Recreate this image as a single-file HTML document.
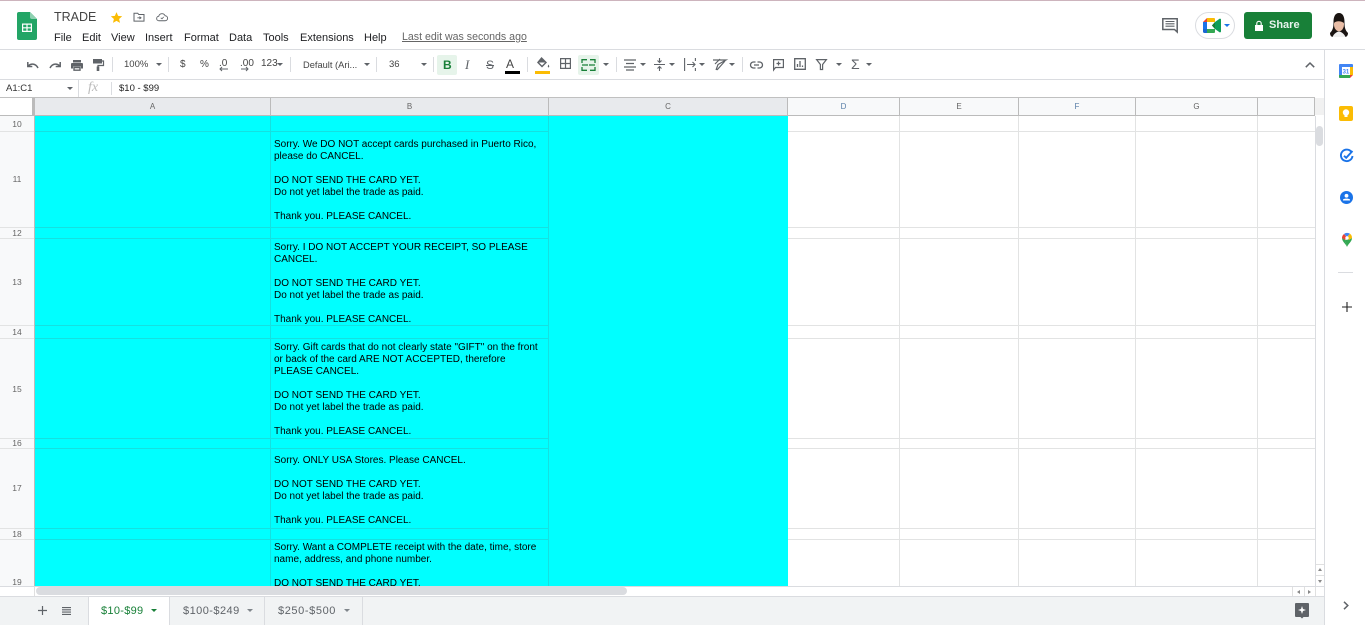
<!DOCTYPE html>
<html><head><meta charset="utf-8"><style>
html,body{margin:0;padding:0;background:#fff;width:1365px;height:625px;overflow:hidden;font-family:"Liberation Sans",sans-serif}
.a{position:absolute}
#root{position:absolute;left:0;top:0;width:1365px;height:625px;overflow:hidden}
.m{position:absolute;top:31px;font-size:11px;line-height:14px;color:#202124;white-space:nowrap}
.t{position:absolute;font-size:10px;color:#444;line-height:12px;white-space:nowrap}
.h{position:absolute;background:#bbb}
.g{position:absolute;background:#e2e3e3}
.c{position:absolute;background:#15e0e0}
.ch{position:absolute;top:98px;height:17px;line-height:17px;font-size:8px;color:#666;text-align:center}
.rn{position:absolute;left:0;width:34px;text-align:center;font-size:8.5px;color:#666;line-height:10px}
.tx{position:absolute;left:274px;width:272px;font-size:10px;line-height:12px;color:#000;white-space:pre}
.sep{position:absolute;top:57px;width:1px;height:15px;background:#dadce0}
.dd{position:absolute;width:0;height:0;border-left:3px solid transparent;border-right:3px solid transparent;border-top:3.5px solid #5f6368}
.tab{position:absolute;top:604px;font-size:11px;letter-spacing:.3px;line-height:14px;color:#5f6368;white-space:nowrap}
svg{position:absolute;overflow:visible}
</style></head><body><div id="root">
<div class="a" style="left:0;top:0;width:1365px;height:1px;background:#cdb4bd"></div>

<!-- logo -->
<svg style="left:17px;top:12px" width="20" height="28" viewBox="0 0 20 28"><path d="M2 0H13L20 7V26a2 2 0 0 1-2 2H2a2 2 0 0 1-2-2V2a2 2 0 0 1 2-2z" fill="#23a566"/><path d="M13 0L20 7H15a2 2 0 0 1-2-2z" fill="#8ed1b1"/><path d="M5 11.500H15V20H5z" fill="#fff"/><path d="M6.200 12.700H9.400V15.200H6.200zM10.600 12.700H13.800V15.200H10.600zM6.200 16.400H9.400V18.800H6.200zM10.600 16.400H13.800V18.800H10.600z" fill="#23a566"/></svg>
<div class="a" style="left:54px;top:9px;font-size:12.500px;line-height:16px;color:#444">TRADE</div>
<svg style="left:110px;top:11px" width="13" height="13" viewBox="0 0 24 24"><path d="M12 2l3 7 7.500 .7-5.700 5 1.700 7.300L12 18.200 5.500 22l1.700-7.300-5.700-5L9 9z" fill="#fbbc04"/></svg>
<svg style="left:133px;top:12px" width="12" height="10" viewBox="0 0 14 12" fill="none" stroke="#5f6368" stroke-width="1.200"><path d="M1 1.500H5.500L6.700 3H13V11H1z"/><path d="M5 7H9M7.500 5.500L9.500 7L7.500 8.500" stroke-width="1"/></svg>
<svg style="left:156px;top:12px" width="12" height="10" viewBox="0 0 14 12" fill="none" stroke="#5f6368" stroke-width="1.100"><path d="M3.500 10.500a2.700 2.700 0 0 1-.4-5.400A4 4 0 0 1 10.700 4.500a3 3 0 0 1 0 6z"/><path d="M5.500 7L7 8.200L9 5.800" stroke-width="1"/></svg>

<div class="m" style="left:54px">File</div>
<div class="m" style="left:82px">Edit</div>
<div class="m" style="left:111px">View</div>
<div class="m" style="left:145px">Insert</div>
<div class="m" style="left:184px">Format</div>
<div class="m" style="left:229px">Data</div>
<div class="m" style="left:263px">Tools</div>
<div class="m" style="left:300px">Extensions</div>
<div class="m" style="left:364px">Help</div>
<div class="m" style="left:402px;top:30px;color:#666;text-decoration:underline;font-size:10.600px">Last edit was seconds ago</div>

<!-- top right -->
<svg style="left:1162px;top:18px" width="16" height="15" viewBox="0 0 16 15"><path d="M.8 .8H15.200V14L12.500 11.500H.8z" fill="none" stroke="#5f6368" stroke-width="1.500"/><path d="M3.500 3.500H12.500M3.500 5.800H12.500M3.500 8.200H12.500" stroke="#5f6368" stroke-width="1.100"/></svg>
<div class="a" style="left:1195px;top:12px;width:40px;height:27px;border:1px solid #dadce0;border-radius:14px;box-sizing:border-box"></div>
<svg style="left:1203px;top:18px" width="18" height="15" viewBox="0 0 18 15"><path d="M4 0H11a1 1 0 0 1 1 1V4H4z" fill="#fbbc04"/><path d="M4 0L0 4H4z" fill="#ea4335"/><path d="M0 4H4V11H0z" fill="#1a73e8"/><path d="M0 11H4V15H1.500A1.500 1.500 0 0 1 0 13.500z" fill="#1967d2"/><path d="M4 11H12V14a1 1 0 0 1-1 1H4z" fill="#34a853"/><path d="M9 7.500L12 4L16.500 .8A1 1 0 0 1 18 1.500V13.500A1 1 0 0 1 16.500 14.200L12 11z" fill="#0f9d58"/><path d="M12 4V11L9 7.500z" fill="#188038"/></svg>
<div class="dd" style="left:1224px;top:24px;border-top-color:#1a73e8"></div>
<div class="a" style="left:1244px;top:12px;width:68px;height:27px;background:#188038;border-radius:3px"></div>
<svg style="left:1255px;top:21px" width="8" height="10" viewBox="0 0 8 10"><path d="M0 4H8V10H0z" fill="#fff"/><path d="M1.800 4V2.500a2.200 2.200 0 0 1 4.400 0V4" fill="none" stroke="#fff" stroke-width="1.100"/></svg>
<div class="a" style="left:1269px;top:18px;font-size:11px;font-weight:bold;line-height:14px;color:#e8f3ec">Share</div>
<svg style="left:1329px;top:13px" width="20" height="24" viewBox="0 0 20 24"><path d="M10 0C6 0 4.500 4 4.500 9C4.500 14 4 17 1 20C1 22 2 24 4 24H16C18 24 19 22 19 20C16 17 15.500 14 15.500 9C15.500 4 14 0 10 0z" fill="#1a1412"/><ellipse cx="10" cy="11.500" rx="5" ry="6.800" fill="#e9bda6"/><path d="M5 10C5 5.500 8 4 10 4C12.500 4 15 6 15 10C13 8.500 8 7 5 10z" fill="#1a1412"/><path d="M3.500 24C5 20.500 8 18.500 10 18.500C12 18.500 15 20.500 16.500 24z" fill="#f0f0f0"/></svg>

<div class="a" style="left:0;top:49px;width:1365px;height:1px;background:#dadce0"></div>
<div class="a" style="left:0;top:79px;width:1324px;height:1px;background:#dadce0"></div>
<div class="a" style="left:0;top:97px;width:1315px;height:1px;background:#c0c0c0"></div>
<div class="a" style="left:1324px;top:50px;width:1px;height:575px;background:#dadce0"></div>

<!-- toolbar -->
<svg style="left:27px;top:61px" width="12" height="8" viewBox="0 0 12 8" fill="none" stroke="#5f6368" stroke-width="1.500"><path d="M.8 1V5.500H5.300M1 5.300C3.500 2.200 8.500 2 11 7"/></svg>
<svg style="left:49px;top:61px" width="12" height="8" viewBox="0 0 12 8" fill="none" stroke="#5f6368" stroke-width="1.500"><path d="M11.200 1V5.500H6.700M11 5.300C8.500 2.200 3.500 2 1 7"/></svg>
<svg style="left:71px;top:60px" width="12" height="11" viewBox="0 0 12 11"><path d="M2 0H10V2.500H2zM1 3H11a1 1 0 0 1 1 1V8.500H10V6.500H2V8.500H0V4a1 1 0 0 1 1-1z" fill="#5f6368"/><path d="M3 7.500H9V10.200H3z" fill="none" stroke="#5f6368" stroke-width="1.400"/></svg>
<svg style="left:93px;top:59px" width="11" height="12" viewBox="0 0 11 12"><path d="M0 0H9V4.500H0z" fill="#5f6368"/><path d="M9 2H10.500V6.500H5V8" fill="none" stroke="#5f6368" stroke-width="1.200"/><path d="M3.700 7.500H6.300V12H3.700z" fill="#5f6368"/></svg>
<div class="sep" style="left:112px"></div>
<div class="t" style="left:124px;top:59px;font-size:9.500px">100%</div>
<div class="dd" style="left:156px;top:63px"></div>
<div class="sep" style="left:168px"></div>
<div class="t" style="left:180px;top:59px">$</div>
<div class="t" style="left:200px;top:59px">%</div>
<div class="t" style="left:219px;top:58px">.0</div>
<div class="t" style="left:240px;top:58px">.00</div>
<svg style="left:211px;top:66px" width="50" height="6" viewBox="0 0 50 6" stroke="#5f6368" fill="none"><path d="M9 3H17M11 1L9 3L11 5M30 3H37M35 1L37 3L35 5"/></svg>
<div class="t" style="left:261px;top:58px">123</div>
<div class="dd" style="left:277px;top:63px"></div>
<div class="sep" style="left:290px"></div>
<div class="t" style="left:303px;top:59px;font-size:9.300px">Default (Ari...</div>
<div class="dd" style="left:364px;top:63px"></div>
<div class="sep" style="left:376px"></div>
<div class="t" style="left:389px;top:59px;font-size:9.500px">36</div>
<div class="dd" style="left:421px;top:63px"></div>
<div class="sep" style="left:433px"></div>
<div class="a" style="left:437px;top:55px;width:20px;height:20px;background:#e6f4ea;border-radius:2px"></div>
<div class="a" style="left:443px;top:58px;font-size:12px;line-height:14px;font-weight:bold;color:#188038">B</div>
<div class="a" style="left:465px;top:58px;font-size:13px;line-height:14px;font-style:italic;color:#5f6368;font-family:'Liberation Serif',serif">I</div>
<div class="a" style="left:486px;top:58px;font-size:12px;line-height:14px;color:#5f6368;text-decoration:line-through">S</div>
<div class="a" style="left:506px;top:57px;font-size:12px;line-height:14px;color:#444">A</div>
<div class="a" style="left:505px;top:71px;width:15px;height:3px;background:#000"></div>
<div class="sep" style="left:527px"></div>
<svg style="left:536px;top:57px" width="14" height="13" viewBox="0 0 14 13"><path d="M5.500 0L11 5.500L6 10.500L1 5.500z" fill="#5f6368"/><path d="M3 5.500H9L6 8.500z" fill="#fff"/><path d="M12.500 7.500Q14 10 12.500 10.500Q11 10 12.500 7.500z" fill="#5f6368"/></svg>
<div class="a" style="left:535px;top:71px;width:15px;height:3px;background:#fbbc04"></div>
<svg style="left:560px;top:58px" width="11" height="11" viewBox="0 0 11 11" fill="none" stroke="#5f6368" stroke-width="1.200"><path d="M.6 .6H10.400V10.400H.6zM5.500 .6V10.400M.6 5.500H10.400"/></svg>
<div class="a" style="left:578px;top:55px;width:21px;height:20px;background:#e6f4ea;border-radius:2px"></div>
<svg style="left:582px;top:59px" width="13" height="12" viewBox="0 0 13 12" fill="none" stroke="#188038" stroke-width="1.300"><path d="M0 4V.7H5M8 .7H13V4M0 8V11.300H5M8 11.300H13V8"/><path d="M0 6H4M9 6H13M5 5V7M8 5V7"/></svg>
<div class="dd" style="left:603px;top:63px"></div>
<div class="sep" style="left:616px"></div>
<svg style="left:624px;top:59px" width="12" height="12" viewBox="0 0 12 12" stroke="#5f6368" stroke-width="1.200"><path d="M0 1H12M2 4.500H10M0 8H12M2 11H10"/></svg>
<div class="dd" style="left:640px;top:63px"></div>
<svg style="left:654px;top:58px" width="11" height="13" viewBox="0 0 11 13" stroke="#5f6368" stroke-width="1.100" fill="none"><path d="M0 6.500H11M5.500 0V4M5.500 9V13"/><path d="M3.500 2.500L5.500 4.500L7.500 2.500M3.500 10.500L5.500 8.500L7.500 10.500"/></svg>
<div class="dd" style="left:669px;top:63px"></div>
<svg style="left:684px;top:58px" width="12" height="13" viewBox="0 0 12 13" stroke="#5f6368" stroke-width="1.100" fill="none"><path d="M.6 0V13M11.400 0V3M11.400 10V13M3 6.500H11M8.500 4L11 6.500L8.500 9"/></svg>
<div class="dd" style="left:699px;top:63px"></div>
<svg style="left:713px;top:58px" width="13" height="13" viewBox="0 0 13 13" stroke="#5f6368" stroke-width="1.200" fill="none"><path d="M0 2H13L5 6.500L3 12M2 6L7 1M4 12L12 3"/></svg>
<div class="dd" style="left:729px;top:63px"></div>
<div class="sep" style="left:742px"></div>
<svg style="left:750px;top:61px" width="13" height="8" viewBox="0 0 13 8" fill="none" stroke="#5f6368" stroke-width="1.300"><path d="M5.500 1H3.500a3 3 0 0 0 0 6H5.500M7.500 1H9.500a3 3 0 0 1 0 6H7.500M4 4H9"/></svg>
<svg style="left:773px;top:59px" width="11" height="12" viewBox="0 0 11 12" fill="none" stroke="#5f6368" stroke-width="1.200"><path d="M.6 .6H10.400V8.500H2.500L.6 11z"/><path d="M5.500 2.500V6.500M3.500 4.500H7.500"/></svg>
<svg style="left:794px;top:58px" width="12" height="12" viewBox="0 0 12 12" fill="none" stroke="#5f6368" stroke-width="1.300"><path d="M.7 .7H11.300V11.300H.7z"/><path d="M3.500 9V6M6 9V3M8.500 9V7.500"/></svg>
<svg style="left:816px;top:59px" width="11" height="11" viewBox="0 0 11 11" fill="none" stroke="#5f6368" stroke-width="1.200"><path d="M.6 .6H10.400L6.600 5.500V10.500H4.400V5.500z"/></svg>
<div class="dd" style="left:836px;top:63px"></div>
<div class="a" style="left:851px;top:56px;font-size:14px;line-height:16px;color:#5f6368">Σ</div>
<div class="dd" style="left:866px;top:63px"></div>
<svg style="left:1305px;top:62px" width="10" height="6" viewBox="0 0 10 6" fill="none" stroke="#5f6368" stroke-width="1.500"><path d="M.8 5.200L5 1L9.200 5.200"/></svg>

<!-- formula bar -->
<div class="a" style="left:6px;top:83px;font-size:9.500px;line-height:12px;color:#333">A1:C1</div>
<div class="dd" style="left:67px;top:87px"></div>
<div class="a" style="left:78px;top:80px;width:1px;height:17px;background:#dadce0"></div>
<div class="a" style="left:88px;top:80px;font-size:14px;line-height:16px;font-style:italic;color:#bbb;font-family:'Liberation Serif',serif">fx</div>
<div class="a" style="left:111px;top:82px;width:1px;height:13px;background:#dadce0"></div>
<div class="a" style="left:119px;top:83px;font-size:9.500px;line-height:12px;color:#222">$10 - $99</div>

<!-- header backgrounds -->
<div class="a" style="left:0;top:98px;width:35px;height:17px;background:#fff"></div>
<div class="a" style="left:32px;top:98px;width:3px;height:17px;background:#bbb"></div>
<div class="a" style="left:35px;top:98px;width:753px;height:17px;background:#e8eaed"></div>
<div class="a" style="left:788px;top:98px;width:527px;height:17px;background:#f8f9fa"></div>
<div class="a" style="left:1315px;top:98px;width:9px;height:17px;background:#f1f1f1"></div>
<div class="a" style="left:0;top:115px;width:35px;height:471px;background:#f8f9fa"></div>
<div class="a" style="left:0;top:115px;width:1315px;height:1px;background:#bbb"></div>

<div class="ch" style="left:35px;width:235px">A</div>
<div class="ch" style="left:271px;width:277px">B</div>
<div class="ch" style="left:549px;width:238px">C</div>
<div class="ch" style="left:788px;width:111px;color:#5a7fa8">D</div>
<div class="ch" style="left:900px;width:118px">E</div>
<div class="ch" style="left:1019px;width:116px;color:#5a7fa8">F</div>
<div class="ch" style="left:1136px;width:121px">G</div>

<div class="h" style="left:270px;top:98px;width:1px;height:17px"></div>
<div class="h" style="left:548px;top:98px;width:1px;height:17px"></div>
<div class="h" style="left:787px;top:98px;width:1px;height:17px"></div>
<div class="h" style="left:899px;top:98px;width:1px;height:17px"></div>
<div class="h" style="left:1018px;top:98px;width:1px;height:17px"></div>
<div class="h" style="left:1135px;top:98px;width:1px;height:17px"></div>
<div class="h" style="left:1257px;top:98px;width:1px;height:17px"></div>
<div class="h" style="left:1314px;top:98px;width:1px;height:17px"></div>

<!-- grid -->
<div class="g" style="left:0;top:131px;width:1315px;height:1px"></div>
<div class="g" style="left:0;top:227px;width:1315px;height:1px"></div>
<div class="g" style="left:0;top:238px;width:1315px;height:1px"></div>
<div class="g" style="left:0;top:325px;width:1315px;height:1px"></div>
<div class="g" style="left:0;top:338px;width:1315px;height:1px"></div>
<div class="g" style="left:0;top:438px;width:1315px;height:1px"></div>
<div class="g" style="left:0;top:448px;width:1315px;height:1px"></div>
<div class="g" style="left:0;top:528px;width:1315px;height:1px"></div>
<div class="g" style="left:0;top:539px;width:1315px;height:1px"></div>
<div class="g" style="left:899px;top:116px;width:1px;height:470px"></div>
<div class="g" style="left:1018px;top:116px;width:1px;height:470px"></div>
<div class="g" style="left:1135px;top:116px;width:1px;height:470px"></div>
<div class="g" style="left:1257px;top:116px;width:1px;height:470px"></div>
<div class="g" style="left:1315px;top:116px;width:1px;height:470px;background:#dadce0"></div>

<!-- cyan -->
<div class="a" style="left:35px;top:116px;width:753px;height:470px;background:#0ff"></div>
<div class="a" style="left:34px;top:116px;width:1px;height:470px;background:#bbb"></div>
<div class="c" style="left:270px;top:116px;width:1px;height:470px"></div>
<div class="c" style="left:548px;top:116px;width:1px;height:470px"></div>
<div class="c" style="left:35px;top:131px;width:513px;height:1px"></div>
<div class="c" style="left:35px;top:227px;width:513px;height:1px"></div>
<div class="c" style="left:35px;top:238px;width:513px;height:1px"></div>
<div class="c" style="left:35px;top:325px;width:513px;height:1px"></div>
<div class="c" style="left:35px;top:338px;width:513px;height:1px"></div>
<div class="c" style="left:35px;top:438px;width:513px;height:1px"></div>
<div class="c" style="left:35px;top:448px;width:513px;height:1px"></div>
<div class="c" style="left:35px;top:528px;width:513px;height:1px"></div>
<div class="c" style="left:35px;top:539px;width:513px;height:1px"></div>

<!-- row nums -->
<div class="rn" style="top:119px">10</div>
<div class="rn" style="top:174px">11</div>
<div class="rn" style="top:228px">12</div>
<div class="rn" style="top:277px">13</div>
<div class="rn" style="top:327px">14</div>
<div class="rn" style="top:384px">15</div>
<div class="rn" style="top:438px">16</div>
<div class="rn" style="top:483px">17</div>
<div class="rn" style="top:529px">18</div>
<div class="rn" style="top:577px">19</div>

<div class="a" style="left:0;top:116px;width:1315px;height:470px;overflow:hidden">
<div class="tx" style="top:23px">Sorry. We DO NOT accept cards purchased in Puerto Rico,
please do CANCEL.

DO NOT SEND THE CARD YET.
Do not yet label the trade as paid.

Thank you. PLEASE CANCEL.</div>
<div class="tx" style="top:126px">Sorry. I DO NOT ACCEPT YOUR RECEIPT, SO PLEASE
CANCEL.

DO NOT SEND THE CARD YET.
Do not yet label the trade as paid.

Thank you. PLEASE CANCEL.</div>
<div class="tx" style="top:226px">Sorry. Gift cards that do not clearly state "GIFT" on the front
or back of the card ARE NOT ACCEPTED, therefore
PLEASE CANCEL.

DO NOT SEND THE CARD YET.
Do not yet label the trade as paid.

Thank you. PLEASE CANCEL.</div>
<div class="tx" style="top:339px">Sorry. ONLY USA Stores. Please CANCEL.

DO NOT SEND THE CARD YET.
Do not yet label the trade as paid.

Thank you. PLEASE CANCEL.</div>
<div class="tx" style="top:426px">Sorry. Want a COMPLETE receipt with the date, time, store
name, address, and phone number.

DO NOT SEND THE CARD YET.</div>
</div>

<!-- v scrollbar -->
<div class="a" style="left:1316px;top:116px;width:8px;height:480px;background:#fff"></div>
<div class="a" style="left:1316px;top:126px;width:7px;height:20px;background:#dadce0;border-radius:4px"></div>
<div class="a" style="left:1316px;top:564px;width:8px;height:1px;background:#e0e0e0"></div>
<div class="a" style="left:1316px;top:575px;width:8px;height:1px;background:#e0e0e0"></div>
<div class="a" style="left:1318px;top:568px;border-left:2.500px solid transparent;border-right:2.500px solid transparent;border-bottom:3px solid #888"></div>
<div class="a" style="left:1318px;top:580px;border-left:2.500px solid transparent;border-right:2.500px solid transparent;border-top:3px solid #888"></div>

<!-- h scrollbar -->
<div class="a" style="left:0;top:586px;width:1324px;height:1px;background:#dadce0"></div>
<div class="a" style="left:34px;top:587px;width:1px;height:9px;background:#e0e0e0"></div>
<div class="a" style="left:36px;top:587px;width:591px;height:8px;background:#dadce0;border-radius:4px"></div>
<div class="a" style="left:1292px;top:587px;width:1px;height:9px;background:#e0e0e0"></div>
<div class="a" style="left:1304px;top:587px;width:1px;height:9px;background:#e0e0e0"></div>
<div class="a" style="left:1315px;top:587px;width:1px;height:9px;background:#e0e0e0"></div>
<div class="a" style="left:1297px;top:590px;border-top:2.500px solid transparent;border-bottom:2.500px solid transparent;border-right:3px solid #888"></div>
<div class="a" style="left:1308px;top:590px;border-top:2.500px solid transparent;border-bottom:2.500px solid transparent;border-left:3px solid #888"></div>

<!-- sheet tabs -->
<div class="a" style="left:0;top:596px;width:1324px;height:29px;background:#f1f3f4"></div>
<div class="a" style="left:0;top:596px;width:1324px;height:1px;background:#dadce0"></div>
<svg style="left:39px;top:607px" width="7" height="7" viewBox="0 0 7 7" stroke="#5f6368" stroke-width="1.200"><path d="M3.500 -1V8M-1 3.500H8"/></svg>
<svg style="left:62px;top:607px" width="9" height="8" viewBox="0 0 9 8" stroke="#5f6368" stroke-width="1.100"><path d="M0 .6H9M0 2.800H9M0 5.100H9M0 7.400H9"/></svg>
<div class="a" style="left:88px;top:597px;width:82px;height:28px;background:#fff;border-left:1px solid #dadce0;border-right:1px solid #dadce0;box-sizing:border-box"></div>
<div class="tab" style="left:101px;color:#188038">$10-$99</div>
<div class="dd" style="left:151px;top:609px;border-top-color:#188038"></div>
<div class="tab" style="left:183px;letter-spacing:.45px">$100-$249</div>
<div class="dd" style="left:247px;top:609px;border-top-color:#80868b"></div>
<div class="a" style="left:264px;top:597px;width:1px;height:28px;background:#dadce0"></div>
<div class="tab" style="left:278px;letter-spacing:.6px">$250-$500</div>
<div class="dd" style="left:344px;top:609px;border-top-color:#80868b"></div>
<div class="a" style="left:362px;top:597px;width:1px;height:28px;background:#dadce0"></div>
<svg style="left:1295px;top:603px" width="14" height="16" viewBox="0 0 14 16"><path d="M1 0H13a1 1 0 0 1 1 1V13a1 1 0 0 1-1 1H8.500L7 15.500L5.500 14H1a1 1 0 0 1-1-1V1a1 1 0 0 1 1-1z" fill="#5f6368"/><path d="M7 3L8 6L11 7L8 8L7 11L6 8L3 7L6 6z" fill="#fff"/></svg>

<!-- side panel -->
<svg style="left:1339px;top:64px" width="14" height="14" viewBox="0 0 14 14"><path d="M1 0H13a1 1 0 0 1 1 1V11H11V14H1a1 1 0 0 1-1-1V1a1 1 0 0 1 1-1z" fill="#4285f4"/><path d="M3 3H11V11H3z" fill="#fff"/><path d="M11 3H14V11H11z" fill="#fbbc04"/><path d="M0 11H11V14H1a1 1 0 0 1-1-1z" fill="#34a853"/><path d="M11 11H14L11 14z" fill="#ea4335"/><text x="3.600" y="9.500" font-size="6" font-weight="bold" fill="#4285f4" font-family="Liberation Sans">31</text></svg>
<svg style="left:1339px;top:106px" width="14" height="15" viewBox="0 0 14 15"><path d="M2 0H12a2 2 0 0 1 2 2V13a2 2 0 0 1-2 2H2a2 2 0 0 1-2-2V2a2 2 0 0 1 2-2z" fill="#fbbc04"/><circle cx="7" cy="6.500" r="3.200" fill="#fff"/><path d="M5.500 9H8.500V11H5.500z" fill="#fff"/></svg>
<svg style="left:1340px;top:149px" width="14" height="14" viewBox="0 0 14 14" fill="none"><path d="M11.500 3A5.800 5.800 0 1 0 12.500 7" stroke="#1a73e8" stroke-width="1.900"/><path d="M4 6.800L6.200 8.800L12.500 2" stroke="#1a73e8" stroke-width="1.900"/></svg>
<svg style="left:1340px;top:191px" width="13" height="13" viewBox="0 0 15 15"><circle cx="7.500" cy="7.500" r="7.500" fill="#1a73e8"/><circle cx="7.500" cy="5.500" r="2.200" fill="#fff"/><path d="M3.500 9.800C4.500 8.500 10.500 8.500 11.500 9.800V11H3.500z" fill="#fff"/></svg>
<svg style="left:1342px;top:233px" width="10" height="14" viewBox="0 0 10 14"><path d="M5 14C4 11 0 8.500 0 5L3 6.500L5 14z" fill="#34a853"/><path d="M5 14L3 7L8 6L10 5C10 8.500 6 11 5 14z" fill="#34a853"/><path d="M0 5A5 5 0 0 1 2 1L5 4L3 7z" fill="#ea4335"/><path d="M2 1A5 5 0 0 1 8 .8L5 4z" fill="#4285f4"/><path d="M8 .8A5 5 0 0 1 10 5L7 7L5 4z" fill="#fbbc04"/><circle cx="5" cy="5" r="1.700" fill="#fff"/></svg>
<div class="a" style="left:1338px;top:272px;width:15px;height:1px;background:#dadce0"></div>
<svg style="left:1342px;top:302px" width="10" height="10" viewBox="0 0 10 10" stroke="#222" stroke-width="1.100"><path d="M5 0V10M0 5H10"/></svg>
<svg style="left:1343px;top:601px" width="6" height="9" viewBox="0 0 6 9" fill="none" stroke="#5f6368" stroke-width="1.500"><path d="M1 .8L4.800 4.500L1 8.200"/></svg>
</div></body></html>
